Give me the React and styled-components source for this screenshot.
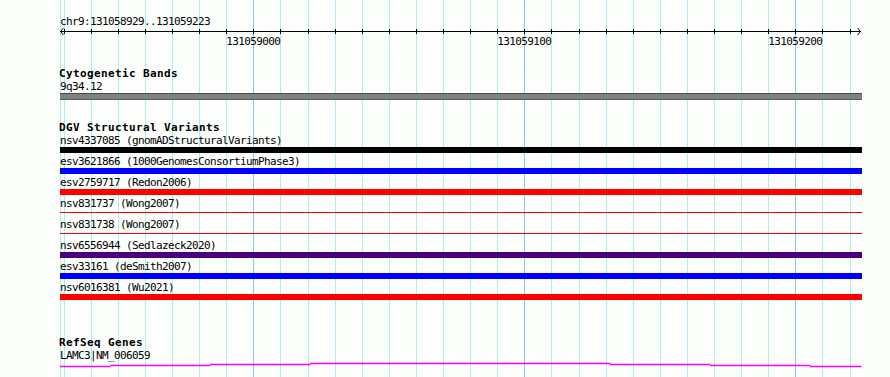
import React from 'react';
import styled, { createGlobalStyle } from 'styled-components';

const Global = createGlobalStyle`
  html, body { margin: 0; padding: 0; background: #fcfefc; }
`;

const BP0 = 131059000;
const PX0 = 253.3;
const SCALE = 2.71;
const xOf = (bp) => PX0 + (bp - BP0) * SCALE;
const ticks = Array.from({ length: 30 }, (_, k) => 131058930 + 10 * k);
const px = (v) => Math.round(v) + 0.5;

const mono = `font-family: "DejaVu Sans Mono", "Liberation Mono", monospace; font-size: 11px;`;

const Canvas = styled.div`
  position: relative;
  width: 890px;
  height: 377px;
  overflow: hidden;
  background: #fcfefc;
`;

const GridLayer = styled.svg`
  position: absolute;
  left: 0;
  top: 0;
  z-index: 0;
  pointer-events: none;
`;

const Panel = styled.div`
  position: relative;
  z-index: 1;
  display: flex;
  flex-direction: column;
  width: 802px;
  padding: 15px 0 0 60px;
`;

const Label = styled.div`
  ${mono}
  letter-spacing: -0.62px;
  height: 13px;
  line-height: 13px;
  color: #000;
  white-space: pre;
`;

const Title = styled.div`
  ${mono}
  font-weight: bold;
  letter-spacing: 0.38px;
  height: 12px;
  line-height: 12px;
  margin-left: -1px;
  margin-top: ${(p) => p.$top}px;
  color: #000;
  white-space: pre;
`;

const RulerSvg = styled.svg`
  display: block;
  overflow: visible;
`;

const TickText = styled.text`
  ${mono}
  letter-spacing: -0.62px;
  fill: #000;
`;

const BandBar = styled.div`
  box-sizing: border-box;
  height: 7px;
  background: #808080;
  border-top: 1px solid #4a4a4a;
  border-bottom: 1px solid #5a5a5a;
`;

const Row = styled.div`
  display: flex;
  flex-direction: column;
  padding-bottom: 2px;
`;

const BarSlot = styled.div`
  height: 6px;
  display: flex;
  flex-direction: column;
  justify-content: ${(p) => (p.$thin ? 'flex-start' : 'stretch')};
`;

const Bar = styled.div`
  height: ${(p) => (p.$thin ? '1px' : '6px')};
  margin-top: ${(p) => (p.$thin ? '2px' : '0')};
  background: ${(p) => p.$color};
`;

const GeneSvg = styled.svg`
  display: block;
`;

const variants = [
  { id: 'nsv4337085', src: 'gnomADStructuralVariants', color: '#000000' },
  { id: 'esv3621866', src: '1000GenomesConsortiumPhase3', color: '#0000ff' },
  { id: 'esv2759717', src: 'Redon2006', color: '#ff0000' },
  { id: 'nsv831737', src: 'Wong2007', color: '#ff0000', thin: true },
  { id: 'nsv831738', src: 'Wong2007', color: '#ff0000', thin: true },
  { id: 'nsv6556944', src: 'Sedlazeck2020', color: '#4b0082' },
  { id: 'esv33161', src: 'deSmith2007', color: '#0000ff' },
  { id: 'nsv6016381', src: 'Wu2021', color: '#ff0000' },
];

const geneSegs = [
  [59, 110, 366.5],
  [110, 210, 365.5],
  [210, 310, 364.5],
  [310, 610, 363.5],
  [610, 710, 364.5],
  [710, 810, 365.5],
  [810, 861, 366.5],
];

export default function App() {
  return (
    <>
      <Global />
      <Canvas>
        <GridLayer width="890" height="377" viewBox="0 0 890 377">
          <line x1="60.5" y1="0" x2="60.5" y2="377" stroke="#aeeef0" strokeWidth="1" />
          {ticks.map((bp) => {
            const major = bp % 100 === 0;
            const x = px(xOf(bp));
            return (
              <line
                key={bp}
                x1={x}
                y1="0"
                x2={x}
                y2="377"
                stroke={major ? '#8ccbe6' : '#aeeef0'}
                strokeWidth="1"
              />
            );
          })}
        </GridLayer>
        <Panel>
          <Label>chr9:131058929..131059223</Label>
          <RulerSvg width="802" height="19" viewBox="60 28 802 19">
            <path d="M60 31.5 H861" stroke="#000" strokeWidth="1" fill="none" />
            <path d="M63.5 28 L60.5 31.5 L63.5 35" stroke="#000" strokeWidth="1" fill="none" />
            <path d="M857.5 28 L860.5 31.5 L857.5 35" stroke="#000" strokeWidth="1" fill="none" />
            {ticks.map((bp) => {
              const x = px(xOf(bp));
              return <line key={bp} x1={x} y1="29" x2={x} y2="34" stroke="#000" strokeWidth="1" />;
            })}
            {ticks
              .filter((bp) => bp % 100 === 0)
              .map((bp) => (
                <TickText key={bp} x={xOf(bp)} y="45.3" textAnchor="middle">
                  {bp}
                </TickText>
              ))}
          </RulerSvg>

          <Title $top={21}>Cytogenetic Bands</Title>
          <Label>9q34.12</Label>
          <BandBar />

          <Title $top={22}>DGV Structural Variants</Title>
          {variants.map((v) => (
            <Row key={v.id}>
              <Label>{`${v.id} (${v.src})`}</Label>
              <BarSlot $thin={v.thin}>
                <Bar $thin={v.thin} $color={v.color} />
              </BarSlot>
            </Row>
          ))}

          <Title $top={35}>RefSeq Genes</Title>
          <Label>LAMC3|NM_006059</Label>
          <GeneSvg width="802" height="6" viewBox="60 362 802 6">
            {geneSegs.map(([a, b, y]) => (
              <line key={a} x1={a} y1={y} x2={b + 0.5} y2={y} stroke="#ff00ff" strokeWidth="1.3" />
            ))}
          </GeneSvg>
        </Panel>
      </Canvas>
    </>
  );
}
